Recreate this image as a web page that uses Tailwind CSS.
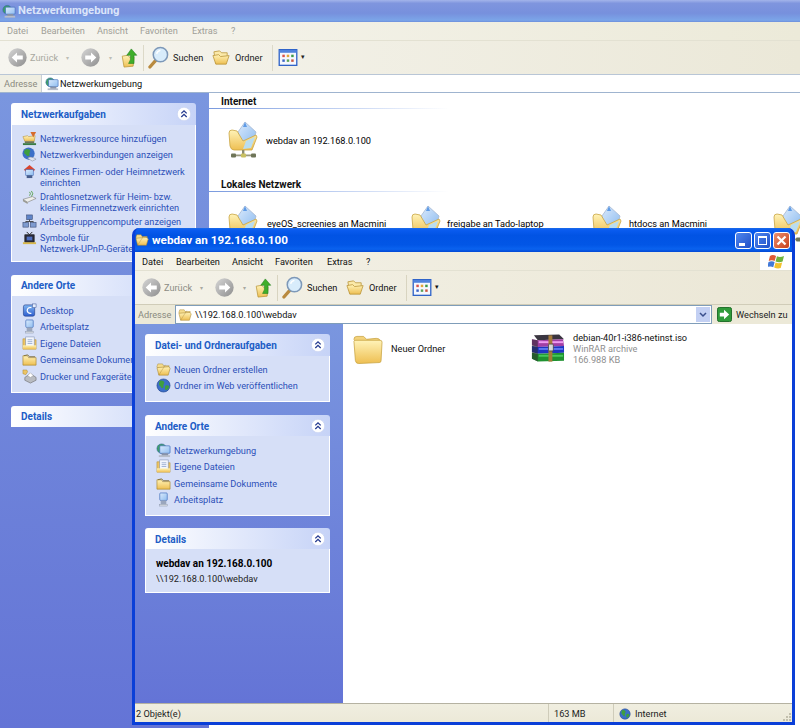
<!DOCTYPE html>
<html lang="de">
<head>
<meta charset="utf-8">
<title>webdav an 192.168.0.100</title>
<script src="https://cdn.jsdelivr.net/npm/@tailwindcss/browser@4"></script>
</head>
<body class="m-0 bg-white">
<svg width="0" height="0" class="absolute">
  <defs>
    <linearGradient id="gy" x1="0" y1="0" x2="0" y2="1"><stop offset="0" stop-color="#fff3b8"/><stop offset="1" stop-color="#eebf52"/></linearGradient>
    <linearGradient id="gb" x1="0" y1="0" x2="1" y2="1"><stop offset="0" stop-color="#dbeafc"/><stop offset="1" stop-color="#8fbdf0"/></linearGradient>
    <linearGradient id="gg" x1="0" y1="0" x2="1" y2="1"><stop offset="0" stop-color="#d6d6d6"/><stop offset="1" stop-color="#8e8e8e"/></linearGradient>
    <linearGradient id="gw" x1="0" y1="0" x2="0" y2="1"><stop offset="0" stop-color="#7fb5f0"/><stop offset="1" stop-color="#2f5fd0"/></linearGradient>
    <symbol id="netfolder" viewBox="0 0 30 40">
      <path d="M17 1 L28 11 L25 22 L13 22 L10 11 Z" fill="url(#gb)" stroke="#a5b8d2" stroke-width=".8"/>
      <path d="M17 1 L19 6 L15 6 Z" fill="#5f9be6"/>
      <path d="M1 12 Q1 9 4 9 L9 10 L15 20 L28 14 L29 16 L24 29 L6 29 Q3 29 2 25 Z" fill="url(#gy)" stroke="#c9a443" stroke-width=".8"/>
      <path d="M18 20 L27 16 L23 27 L15 28 Z" fill="#b9ddf0"/>
      <rect x="14" y="29" width="2.400" height="5" fill="#8d8d72"/>
      <rect x="5" y="33.500" width="21" height="1.800" fill="#9a9a80"/>
      <rect x="3" y="32.500" width="5" height="4" rx="1" fill="#6f7558"/>
      <rect x="13" y="32.500" width="5" height="4" rx="1" fill="#c9c062"/>
      <rect x="23" y="32.500" width="5" height="4" rx="1" fill="#6f7558"/>
    </symbol>
    <symbol id="folderbig" viewBox="0 0 32 32">
      <path d="M2 6 Q2 3 5 3 L12 3 L15 6 L25 5 Q29 5 29 8 L29 9 L4 9 Z" fill="#f3d27a" stroke="#c9a443" stroke-width=".8"/>
      <path d="M2 8 Q2 7 4 7 L29 7 Q31 7 31 9 L30 28 Q30 30 28 30 L7 31 Q4 31 3.500 28 Z" fill="url(#gy)" stroke="#c9a443" stroke-width=".8"/>
    </symbol>
    <symbol id="folderopen" viewBox="0 0 20 20">
      <path d="M2 4 L8 3 L10 5 L16 5 L16 9 L4 16 Z" fill="#fbe9a9" stroke="#b89336" stroke-width=".8"/>
      <path d="M1 8 L7 7 L9 9 L18 8 L15 17 L4 17 Z" fill="url(#gy)" stroke="#b89336" stroke-width=".8"/>
    </symbol>
    <symbol id="folderup" viewBox="0 0 18 22">
      <path d="M1 9 L7 8 L9 10 L14 10 L13 20 L3 21 Z" fill="url(#gy)" stroke="#b89336" stroke-width=".8"/>
      <path d="M11 1 L17 8 L14 8 L14 17 L8 17 Q11 13 10 8 L6 8 Z" fill="#3fae2a" stroke="#1f7d1b" stroke-width=".6"/>
    </symbol>
    <symbol id="search" viewBox="0 0 22 24">
      <path d="M2 22 L9 14" stroke="#b98a3e" stroke-width="3.400" stroke-linecap="round"/>
      <circle cx="13" cy="9" r="7.500" fill="#d8ecfb" stroke="#7d98b8" stroke-width="1.600"/>
      <path d="M9 8 Q10 5 13 4.500" stroke="#fff" stroke-width="1.500" fill="none"/>
    </symbol>
    <symbol id="views" viewBox="0 0 20 18">
      <rect x=".7" y=".7" width="18.600" height="16.600" fill="#f6f8fe" stroke="#2f63c8" stroke-width="1.400"/>
      <rect x="1" y="1" width="18" height="3" fill="#4f82dd"/>
      <rect x="4" y="6" width="2.600" height="2.600" fill="#d9534a"/><rect x="8.700" y="6" width="2.600" height="2.600" fill="#e0a63a"/><rect x="13.400" y="6" width="2.600" height="2.600" fill="#3d9a48"/>
      <rect x="4" y="11" width="2.600" height="2.600" fill="#3d66c4"/><rect x="8.700" y="11" width="2.600" height="2.600" fill="#5aa257"/><rect x="13.400" y="11" width="2.600" height="2.600" fill="#c9563f"/>
    </symbol>
    <symbol id="back" viewBox="0 0 18 18">
      <circle cx="9" cy="9" r="8.700" fill="url(#gg)"/>
      <path d="M3.500 9 L8.500 4.300 L8.500 7.200 L14 7.200 L14 10.800 L8.500 10.800 L8.500 13.700 Z" fill="#fff"/>
    </symbol>
    <symbol id="fwd" viewBox="0 0 18 18">
      <circle cx="9" cy="9" r="8.700" fill="url(#gg)"/>
      <path d="M14.500 9 L9.500 4.300 L9.500 7.200 L4 7.200 L4 10.800 L9.500 10.800 L9.500 13.700 Z" fill="#fff"/>
    </symbol>
    <symbol id="globe" viewBox="0 0 16 16">
      <circle cx="8" cy="8" r="7" fill="#3c6fc8" stroke="#1f3f85" stroke-width=".6"/>
      <path d="M4 3 Q8 2 9 5 Q7 8 8 10 Q6 12 5 9 Q2 8 4 3 Z M10 8 Q13 7 14 9 Q13 13 10 13 Q9 11 10 8 Z" fill="#3f9e3f"/>
    </symbol>
    <symbol id="netcomp" viewBox="0 0 16 16">
      <circle cx="6" cy="6" r="5" fill="#3fa06a" stroke="#2b5f9a" stroke-width=".6"/>
      <rect x="4" y="3" width="11" height="8" rx="1" fill="url(#gb)" stroke="#3a68b8" stroke-width=".7"/>
      <rect x="6" y="11" width="7" height="3" fill="#8a94a8"/>
      <rect x="3" y="13" width="12" height="2" fill="#b7bdc9"/>
    </symbol>
    <symbol id="netglobe" viewBox="0 0 16 16">
      <circle cx="7" cy="7" r="6.500" fill="#3c6fc8"/>
      <path d="M3 3 Q7 1 9 4 Q7 7 8 9 Q6 11 4 8 Q1 7 3 3 Z" fill="#3f9e3f"/>
      <path d="M6 12 Q9 9 15 13 L11 15 Z" fill="#dfe3ee" stroke="#7a8090" stroke-width=".5"/>
    </symbol>
    <symbol id="netadd" viewBox="0 0 16 16">
      <path d="M1 6 L6 5 L7 6 L14 5 L13 11 L3 11 Z" fill="url(#gy)" stroke="#b89336" stroke-width=".6"/>
      <path d="M9 1 L15 1 L12 7 Z" fill="#d66c2c"/>
      <rect x="3" y="11" width="10" height="2" fill="#6f7558"/><rect x="1" y="13" width="14" height="2" fill="#3a7a45"/>
    </symbol>
    <symbol id="home" viewBox="0 0 16 16">
      <path d="M8 1 L14 6 L12 8 L4 8 L2 6 Z" fill="#d9442e"/>
      <rect x="4" y="6" width="8" height="6" fill="url(#gb)" stroke="#3a68b8" stroke-width=".6"/>
      <rect x="5" y="12" width="6" height="3" fill="#475d8c"/>
    </symbol>
    <symbol id="wifi" viewBox="0 0 16 16">
      <path d="M1 10 L11 7 L15 9 L6 13 Z" fill="#eeeeea" stroke="#777" stroke-width=".6"/>
      <path d="M1 10 L6 13 L6 15 L1 12 Z" fill="#9a9a92"/>
      <path d="M8 6 Q10 4 8 2 M10 7 Q13 4 10 1" stroke="#59a14f" fill="none" stroke-width="1"/>
    </symbol>
    <symbol id="workgroup" viewBox="0 0 16 16">
      <rect x="5" y="1" width="6" height="5" fill="#5f84c8" stroke="#34456f" stroke-width=".6"/>
      <rect x="1" y="9" width="6" height="5" fill="#7e9bd0" stroke="#34456f" stroke-width=".6"/>
      <rect x="9" y="9" width="6" height="5" fill="#7e9bd0" stroke="#34456f" stroke-width=".6"/>
      <path d="M8 6 L8 8 M4 9 L4 8 L12 8 L12 9" stroke="#444" fill="none"/>
    </symbol>
    <symbol id="tv" viewBox="0 0 16 16">
      <rect x="3" y="4" width="10" height="8" fill="#2a2a38" stroke="#111" stroke-width=".6"/>
      <rect x="5" y="6" width="6" height="4" fill="#4f6fc0"/>
      <path d="M5 1 L8 4 L11 1" stroke="#222" fill="none"/>
      <rect x="1" y="12" width="14" height="2" fill="#d9b84a"/>
    </symbol>
    <symbol id="desktop" viewBox="0 0 16 16">
      <rect x="1.500" y="2" width="12" height="12" rx="2" fill="url(#gw)" stroke="#24418c" stroke-width=".7"/>
      <path d="M10 5 Q6 4 5.500 8 Q6 11.500 10 11" stroke="#fff" stroke-width="1.300" fill="none"/>
      <rect x="11" y="1" width="4" height="4" fill="#e6eefc" stroke="#24418c" stroke-width=".5"/>
    </symbol>
    <symbol id="pc" viewBox="0 0 16 16">
      <rect x="4" y="1" width="8" height="8" rx="1" fill="url(#gb)" stroke="#3a68b8" stroke-width=".7"/>
      <rect x="5" y="9" width="6" height="5" fill="#9aa6bd"/>
      <rect x="4" y="13" width="8" height="2" fill="#d5d9e2" stroke="#7f8aa0" stroke-width=".4"/>
    </symbol>
    <symbol id="docs" viewBox="0 0 16 16">
      <path d="M1 3 L5 3 L6 4 L15 4 L15 14 L1 14 Z" fill="#ecc466" stroke="#b89336" stroke-width=".6"/>
      <rect x="4" y="1" width="9" height="11" fill="#f3f6fd" stroke="#7f8fb0" stroke-width=".6"/>
      <path d="M6 4 H11 M6 6 H11 M6 8 H11" stroke="#8aa0c8" stroke-width=".8"/>
      <rect x="1" y="10" width="14" height="4" fill="url(#gy)"/>
    </symbol>
    <symbol id="shared" viewBox="0 0 16 16">
      <path d="M1 4 L6 4 L7 6 L15 6 L15 14 L1 14 Z" fill="url(#gy)" stroke="#a88630" stroke-width=".7"/>
      <path d="M2 4 L6 3 L8 5 L14 5" stroke="#705d20" fill="none" stroke-width=".8"/>
    </symbol>
    <symbol id="printer" viewBox="0 0 16 16">
      <path d="M1 1 L5 1 L6 3 L4 6 L1 5 Z" fill="#ecc466" stroke="#a88630" stroke-width=".5"/>
      <path d="M3 9 L9 5 L15 9 L15 12 L9 15 L3 12 Z" fill="#b9bcc2" stroke="#666" stroke-width=".6"/>
      <path d="M6 7 L9 4 L12 7 L9 9 Z" fill="#fff" stroke="#888" stroke-width=".4"/>
    </symbol>
    <symbol id="foldersm" viewBox="0 0 16 16">
      <path d="M1 5 L2 2 L7 2 L8 4 L14 4 L12 7 L4 8 Z" fill="#f5dc8e" stroke="#a88630" stroke-width=".5"/>
      <path d="M1 6 L14 5 L15 7 L13 14 L3 14 Z" fill="url(#gy)" stroke="#a88630" stroke-width=".6"/>
      <path d="M3 14 L10 3" stroke="#7f5a12" stroke-width=".7" opacity=".4"/>
    </symbol>
    <symbol id="chev" viewBox="0 0 14 14">
      <circle cx="7" cy="7" r="6.700" fill="#fff" stroke="#c3cff0" stroke-width=".6"/>
      <path d="M4.300 6.400 L7 3.800 L9.700 6.400 M4.300 10 L7 7.400 L9.700 10" stroke="#23398f" stroke-width="1.300" fill="none"/>
    </symbol>
    <symbol id="rar" viewBox="0 0 36 30">
      <path d="M4 2 L30 1 L35 6 L8 7 Z" fill="#3a3540"/>
      <path d="M2 6 L8 7 L34 6 L35 13 L8 14 L2 12 Z" fill="#a23fa5"/>
      <rect x="9" y="8" width="25" height="2" fill="#f09bf0"/>
      <path d="M2 13 L8 14 L35 13 L35 20 L8 21 L2 19 Z" fill="#1f34c2"/>
      <rect x="9" y="15" width="25" height="2" fill="#5d76f2"/>
      <path d="M2 20 L8 21 L35 20 L35 28 L8 29 L2 26 Z" fill="#1f9230"/>
      <rect x="9" y="22" width="25" height="2" fill="#46c85a"/>
      <path d="M2 6 L8 7 L8 29 L2 26 Z" fill="#2a2a2a" opacity=".55"/>
      <rect x="19" y="2" width="4" height="27" fill="#a67b3a"/>
      <rect x="19" y="11" width="5" height="7" rx="1" fill="#d8d8d8" stroke="#333" stroke-width=".7"/>
    </symbol>
    <symbol id="go" viewBox="0 0 16 16">
      <rect x=".5" y=".5" width="15" height="15" rx="2" fill="#2f9a3a" stroke="#1a6a24"/>
      <path d="M7.500 3 L13 8 L7.500 13 L7.500 10 L3 10 L3 6 L7.500 6 Z" fill="#fff"/>
    </symbol>
    <symbol id="flag" viewBox="0 0 18 16">
      <path d="M2 2 Q5 0 8.500 2 L7 7.500 Q4 6 .7 7.500 Z" fill="#dd5a36"/>
      <path d="M9.500 2.500 Q13 4 17 2 L15.500 8 Q12 9.500 8 8 Z" fill="#6fb33c"/>
      <path d="M.5 8.500 Q4 7 7 8.500 L5.500 14 Q3 12.500 -1 14 Z" fill="#4279d8"/>
      <path d="M8 9 Q11 10.500 15 9 L13.500 15 Q10 16 6.500 14.500 Z" fill="#f2c22e"/>
    </symbol>
    <symbol id="grip" viewBox="0 0 11 11">
      <path d="M8 2 h2 v2 h-2z M5 5 h2 v2 h-2z M8 5 h2 v2 h-2z M2 8 h2 v2 h-2z M5 8 h2 v2 h-2z M8 8 h2 v2 h-2z" fill="#c2bfad"/>
    </symbol>
  </defs>
</svg>

<div class="relative w-[800px] h-[728px] overflow-hidden bg-white font-['Roboto',sans-serif] text-[9.2px] leading-none text-black">

  <!-- inactive window behind -->
  <div class="absolute left-0 top-0 w-[800px] h-[728px] flex flex-col">
    <div class="h-[22px] shrink-0 flex items-center pl-[2px] gap-[2px] bg-[linear-gradient(180deg,#a3b4ea_0%,#7f95de_15%,#7790dd_60%,#7ba5e8_92%,#6d8fdc_100%)]">
      <svg class="w-[14px] h-[15px]"><use href="#netcomp"/></svg>
      <span class="text-[#dbe5fa] text-[11.2px] font-bold">Netzwerkumgebung</span>
    </div>
    <div class="h-[19px] shrink-0 flex items-center bg-linear-to-r from-[#f6f5ef] to-[#ecead9] text-[#a0a098] border-b border-[#e3e1d2]">
      <span class="ml-[7px] w-[34px]">Datei</span><span class="w-[57px]">Bearbeiten</span><span class="w-[42px] -ml-[1px]">Ansicht</span><span class="w-[52px] ml-[1px]">Favoriten</span><span class="w-[39px]">Extras</span><span>?</span>
    </div>
    <div class="h-[34px] shrink-0 flex items-center bg-linear-to-r from-[#f6f5ef] to-[#ebe8d8] border-b border-[#b9c6d6]">
      <svg class="w-[19px] h-[19px] ml-[8px]"><use href="#back"/></svg>
      <span class="ml-[3px] w-[30px] text-[#a8a8a0]">Zurück</span>
      <span class="ml-[6px] text-[6px] text-[#bdbdb5]">▾</span>
      <svg class="w-[19px] h-[19px] ml-[12px]"><use href="#fwd"/></svg>
      <span class="ml-[9px] text-[6px] text-[#bdbdb5]">▾</span>
      <svg class="w-[17px] h-[20px] ml-[9px]"><use href="#folderup"/></svg>
      <div class="w-px h-[26px] bg-[#dcd9c8] ml-[5px]"></div>
      <svg class="w-[21px] h-[23px] ml-[4px]"><use href="#search"/></svg>
      <span class="ml-[4px] w-[30px] text-[#222]">Suchen</span>
      <svg class="w-[19px] h-[19px] ml-[9px]"><use href="#folderopen"/></svg>
      <span class="ml-[4px] w-[30px] text-[#222]">Ordner</span>
      <div class="w-px h-[26px] bg-[#dcd9c8] ml-[7px]"></div>
      <svg class="w-[20px] h-[17px] ml-[5px]"><use href="#views"/></svg>
      <span class="ml-[3px] text-[7px] text-[#222]">▾</span>
    </div>
    <div class="h-[18px] shrink-0 flex items-center bg-[#efeee2] border-b border-[#9fb4cf]">
      <span class="ml-[4px] w-[37px] text-[#8a8a80]">Adresse</span>
      <div class="flex-1 h-full bg-white flex items-center pl-[3px] gap-[1px] border-l border-[#c8cfd6]">
        <svg class="w-[14px] h-[14px]"><use href="#netcomp"/></svg>
        <span class="text-[#111]">Netzwerkumgebung</span>
      </div>
    </div>
    <div class="flex-1 flex min-h-0">
      <div class="w-[209px] shrink-0 bg-[linear-gradient(180deg,#7a96df,#6474d6)] pl-[11px] pt-[10px] flex flex-col">
        <div class="w-[185px]">
          <div class="h-[22px] rounded-t-[3px] bg-linear-to-r from-white to-[#c6d3f7] flex items-center justify-between pl-[10px] pr-[5px]">
            <span class="font-bold text-[10px] text-[#215dc6] pt-[2px]">Netzwerkaufgaben</span>
            <svg class="w-[14px] h-[14px]"><use href="#chev"/></svg>
          </div>
          <div class="h-[137px] bg-[#d6dff7] border border-t-0 border-white pl-[10px] pt-[5px] text-[#2d50b8] flex flex-col whitespace-nowrap">
            <div class="h-[16.5px] flex items-center gap-[3px]"><svg class="w-[15px] h-[15px] shrink-0"><use href="#netadd"/></svg><span>Netzwerkressource hinzufügen</span></div>
            <div class="h-[16.5px] flex items-center gap-[3px]"><svg class="w-[15px] h-[15px] shrink-0"><use href="#netglobe"/></svg><span>Netzwerkverbindungen anzeigen</span></div>
            <div class="h-[25px] flex gap-[3px]"><svg class="w-[15px] h-[15px] shrink-0 mt-[1px]"><use href="#home"/></svg><span class="leading-[11px] pt-[3px]">Kleines Firmen- oder Heimnetzwerk<br>einrichten</span></div>
            <div class="h-[25px] flex gap-[3px]"><svg class="w-[15px] h-[15px] shrink-0 mt-[2px]"><use href="#wifi"/></svg><span class="leading-[11px] pt-[3px]">Drahtlosnetzwerk für Heim- bzw.<br>kleines Firmennetzwerk einrichten</span></div>
            <div class="h-[16.5px] flex items-center gap-[3px]"><svg class="w-[15px] h-[15px] shrink-0"><use href="#workgroup"/></svg><span>Arbeitsgruppencomputer anzeigen</span></div>
            <div class="h-[25px] flex gap-[3px]"><svg class="w-[15px] h-[15px] shrink-0 mt-[1px]"><use href="#tv"/></svg><span class="leading-[11px] pt-[2px]">Symbole für<br>Netzwerk-UPnP-Geräte ausblenden</span></div>
          </div>
        </div>
        <div class="w-[185px] mt-[13px]">
          <div class="h-[21px] rounded-t-[3px] bg-linear-to-r from-white to-[#c6d3f7] flex items-center pl-[10px]">
            <span class="font-bold text-[10px] text-[#215dc6] pt-[1px]">Andere Orte</span>
          </div>
          <div class="h-[97px] bg-[#d6dff7] border border-t-0 border-white pl-[10px] pt-[6px] text-[#2d50b8] flex flex-col whitespace-nowrap">
            <div class="h-[16.5px] flex items-center gap-[3px]"><svg class="w-[15px] h-[15px] shrink-0"><use href="#desktop"/></svg><span>Desktop</span></div>
            <div class="h-[16.5px] flex items-center gap-[3px]"><svg class="w-[15px] h-[15px] shrink-0"><use href="#pc"/></svg><span>Arbeitsplatz</span></div>
            <div class="h-[16.5px] flex items-center gap-[3px]"><svg class="w-[15px] h-[15px] shrink-0"><use href="#docs"/></svg><span>Eigene Dateien</span></div>
            <div class="h-[16.5px] flex items-center gap-[3px]"><svg class="w-[15px] h-[15px] shrink-0"><use href="#shared"/></svg><span>Gemeinsame Dokumente</span></div>
            <div class="h-[16.5px] flex items-center gap-[3px]"><svg class="w-[15px] h-[15px] shrink-0"><use href="#printer"/></svg><span>Drucker und Faxgeräte</span></div>
          </div>
        </div>
        <div class="w-[185px] mt-[13px]">
          <div class="h-[21px] rounded-t-[3px] bg-linear-to-r from-white to-[#c6d3f7] flex items-center pl-[10px]">
            <span class="font-bold text-[10px] text-[#215dc6] pt-[1px]">Details</span>
          </div>
        </div>
      </div>
      <div class="flex-1 bg-white pl-[12px] pt-[3px] relative">
        <div class="font-bold text-[10px] h-[11px] flex items-center text-[#111]">Internet</div>
        <div class="-ml-[12px] mt-[1px] w-[240px] h-px bg-linear-to-r from-[#7a9ade] to-white"></div>
        <div class="flex items-center mt-[12px] ml-[7px] h-[40px]">
          <svg class="w-[30px] h-[40px]"><use href="#netfolder"/></svg>
          <span class="ml-[8px] -mt-[1px]">webdav an 192.168.0.100</span>
        </div>
        <div class="font-bold text-[10px] h-[11px] flex items-center mt-[18px] text-[#111]">Lokales Netzwerk</div>
        <div class="-ml-[12px] mt-[1px] w-[240px] h-px bg-linear-to-r from-[#7a9ade] to-white"></div>
        <div class="flex mt-[13px] ml-[7px] whitespace-nowrap">
          <div class="w-[183px] shrink-0 flex items-center h-[40px]"><svg class="w-[30px] h-[40px]"><use href="#netfolder"/></svg><span class="ml-[9px] -mt-[2px]">eyeOS_screenies an Macmini</span></div>
          <div class="w-[181px] shrink-0 flex items-center h-[40px]"><svg class="w-[30px] h-[40px]"><use href="#netfolder"/></svg><span class="ml-[6px] -mt-[2px]">freigabe an Tado-laptop</span></div>
          <div class="w-[181px] shrink-0 flex items-center h-[40px]"><svg class="w-[30px] h-[40px]"><use href="#netfolder"/></svg><span class="ml-[7px] -mt-[2px]">htdocs an Macmini</span></div>
          <div class="w-[30px] shrink-0 h-[40px]"><svg class="w-[30px] h-[40px]"><use href="#netfolder"/></svg></div>
        </div>
      </div>
    </div>
  </div>

  <!-- active window in front -->
  <div class="absolute left-[132px] top-[228px] w-[663px] h-[497px] flex flex-col bg-[#0a3fd8] rounded-t-[7px] overflow-hidden border-x-[3px] border-b-[3px] border-[#0a3fd8]">
    <div class="h-[24px] shrink-0 -mx-[3px] flex items-center pl-[3px] pr-[4px] gap-[3px] bg-[linear-gradient(180deg,#1c6be8_0%,#0a5cf0_8%,#0153e4_30%,#0256e6_70%,#0a62ef_88%,#0348d4_100%)]">
      <svg class="w-[14px] h-[14px]"><use href="#foldersm"/></svg>
      <span class="text-white text-[11.7px] font-bold pt-px">webdav an 192.168.0.100</span>
      <div class="ml-auto flex gap-[2px] mr-[1px]">
        <div class="w-[17px] h-[17px] rounded-[3px] border border-white bg-[linear-gradient(135deg,#4f86ee,#2050c8)] flex items-end pl-[3px] pb-[2px]"><div class="w-[6px] h-[3px] bg-white"></div></div>
        <div class="w-[17px] h-[17px] rounded-[3px] border border-white bg-[linear-gradient(135deg,#4f86ee,#2050c8)] flex items-center justify-center"><div class="w-[9px] h-[9px] border border-t-[2px] border-white"></div></div>
        <div class="w-[17px] h-[17px] rounded-[3px] border border-white bg-[linear-gradient(135deg,#e98f70,#c8401a)] flex items-center justify-center">
          <svg class="w-[11px] h-[11px]" viewBox="0 0 11 11"><path d="M1.500 1.500 L9.500 9.500 M9.500 1.500 L1.500 9.500" stroke="#fff" stroke-width="2.200"/></svg>
        </div>
      </div>
    </div>
    <div class="h-[19px] shrink-0 flex items-center bg-linear-to-r from-[#f4f2e8] to-[#ebe7d6] text-[#111] border-b border-[#e3e1d2]">
      <span class="ml-[7px] w-[34px] pt-px">Datei</span><span class="w-[57px] pt-px">Bearbeiten</span><span class="w-[42px] -ml-[1px] pt-px">Ansicht</span><span class="w-[52px] ml-[1px] pt-px">Favoriten</span><span class="w-[39px] pt-px">Extras</span><span class="pt-px">?</span>
      <div class="ml-auto w-[32px] h-full bg-white flex items-center justify-center"><svg class="w-[17px] h-[15px]"><use href="#flag"/></svg></div>
    </div>
    <div class="h-[34px] shrink-0 flex items-center bg-linear-to-r from-[#f4f2e8] to-[#ebe7d6] border-b border-[#d0ccb8]">
      <svg class="w-[19px] h-[19px] ml-[7px]"><use href="#back"/></svg>
      <span class="ml-[3px] w-[30px] text-[#8c8c84]">Zurück</span>
      <span class="ml-[6px] text-[6px] text-[#a8a8a0]">▾</span>
      <svg class="w-[19px] h-[19px] ml-[12px]"><use href="#fwd"/></svg>
      <span class="ml-[9px] text-[6px] text-[#a8a8a0]">▾</span>
      <svg class="w-[17px] h-[20px] ml-[9px]"><use href="#folderup"/></svg>
      <div class="w-px h-[26px] bg-[#d8d4c0] ml-[5px]"></div>
      <svg class="w-[21px] h-[23px] ml-[4px]"><use href="#search"/></svg>
      <span class="ml-[4px] w-[30px] text-[#111]">Suchen</span>
      <svg class="w-[19px] h-[19px] ml-[9px]"><use href="#folderopen"/></svg>
      <span class="ml-[4px] w-[30px] text-[#111]">Ordner</span>
      <div class="w-px h-[26px] bg-[#d8d4c0] ml-[7px]"></div>
      <svg class="w-[20px] h-[17px] ml-[5px]"><use href="#views"/></svg>
      <span class="ml-[3px] text-[7px] text-[#111]">▾</span>
    </div>
    <div class="h-[19px] shrink-0 flex items-center bg-[#ece9d8]">
      <span class="ml-[3px] w-[37px] text-[#8a8a80]">Adresse</span>
      <div class="w-[537px] h-full bg-white border border-[#7f9db9] flex items-center pl-[2px] gap-[1px]">
        <svg class="w-[14px] h-[14px] shrink-0"><use href="#foldersm"/></svg>
        <span class="ml-[2px] text-[#111]">\\192.168.0.100\webdav</span>
        <div class="ml-auto w-[14px] h-[15px] bg-[#c3d0f3] flex items-center justify-center mr-px"><svg class="w-[8px] h-[6px]" viewBox="0 0 8 6"><path d="M1 1 L4 4 L7 1" stroke="#3a4f8c" stroke-width="1.500" fill="none"/></svg></div>
      </div>
      <svg class="w-[15px] h-[15px] ml-[5px] shrink-0"><use href="#go"/></svg>
      <span class="ml-[4px] text-[#222] whitespace-nowrap">Wechseln zu</span>
    </div>
    <div class="flex-1 flex min-h-0 bg-white">
      <div class="w-[208px] shrink-0 bg-[linear-gradient(180deg,#7a96df,#6474d6)] pl-[10px] pt-[10px] flex flex-col">
        <div class="w-[185px]">
          <div class="h-[22px] rounded-t-[3px] bg-linear-to-r from-white to-[#c6d3f7] flex items-center justify-between pl-[10px] pr-[5px]">
            <span class="font-bold text-[10px] text-[#215dc6] pt-[2px]">Datei- und Ordneraufgaben</span>
            <svg class="w-[14px] h-[14px]"><use href="#chev"/></svg>
          </div>
          <div class="h-[46px] bg-[#d6dff7] border border-t-0 border-white pl-[10px] pt-[5px] text-[#2d50b8] flex flex-col">
            <div class="h-[16.5px] flex items-center gap-[3px]"><svg class="w-[15px] h-[15px] shrink-0"><use href="#foldersm"/></svg><span>Neuen Ordner erstellen</span></div>
            <div class="h-[16.5px] flex items-center gap-[3px]"><svg class="w-[15px] h-[15px] shrink-0"><use href="#globe"/></svg><span>Ordner im Web veröffentlichen</span></div>
          </div>
        </div>
        <div class="w-[185px] mt-[13px]">
          <div class="h-[21px] rounded-t-[3px] bg-linear-to-r from-white to-[#c6d3f7] flex items-center justify-between pl-[10px] pr-[5px]">
            <span class="font-bold text-[10px] text-[#215dc6] pt-[2px]">Andere Orte</span>
            <svg class="w-[14px] h-[14px]"><use href="#chev"/></svg>
          </div>
          <div class="h-[80px] bg-[#d6dff7] border border-t-0 border-white pl-[10px] pt-[6px] text-[#2d50b8] flex flex-col">
            <div class="h-[16.5px] flex items-center gap-[3px]"><svg class="w-[15px] h-[15px] shrink-0"><use href="#netcomp"/></svg><span>Netzwerkumgebung</span></div>
            <div class="h-[16.5px] flex items-center gap-[3px]"><svg class="w-[15px] h-[15px] shrink-0"><use href="#docs"/></svg><span>Eigene Dateien</span></div>
            <div class="h-[16.5px] flex items-center gap-[3px]"><svg class="w-[15px] h-[15px] shrink-0"><use href="#shared"/></svg><span>Gemeinsame Dokumente</span></div>
            <div class="h-[16.5px] flex items-center gap-[3px]"><svg class="w-[15px] h-[15px] shrink-0"><use href="#pc"/></svg><span>Arbeitsplatz</span></div>
          </div>
        </div>
        <div class="w-[185px] mt-[12px]">
          <div class="h-[21px] rounded-t-[3px] bg-linear-to-r from-white to-[#c6d3f7] flex items-center justify-between pl-[10px] pr-[5px]">
            <span class="font-bold text-[10px] text-[#215dc6] pt-[2px]">Details</span>
            <svg class="w-[14px] h-[14px]"><use href="#chev"/></svg>
          </div>
          <div class="h-[44px] bg-[#d6dff7] border border-t-0 border-white pl-[10px] pt-[10px] flex flex-col gap-[5px]">
            <span class="font-bold text-[10px]">webdav an 192.168.0.100</span>
            <span class="text-[#222]">\\192.168.0.100\webdav</span>
          </div>
        </div>
      </div>
      <div class="flex-1 pt-[9px] pl-[9px] flex items-start relative">
        <svg class="w-[31px] h-[32px] shrink-0"><use href="#folderbig"/></svg>
        <span class="ml-[8px] mt-[11px] w-[139px] text-[#111]">Neuer Ordner</span>
        <svg class="w-[35px] h-[30px] shrink-0"><use href="#rar"/></svg>
        <div class="ml-[8px] flex flex-col gap-[1px] leading-[10px] whitespace-nowrap">
          <span class="text-[#111]">debian-40r1-i386-netinst.iso</span>
          <span class="text-[#8f8f8f]">WinRAR archive</span>
          <span class="text-[#8f8f8f]">166.988 KB</span>
        </div>
      </div>
    </div>
    <div class="h-[19px] shrink-0 flex items-center bg-[linear-gradient(180deg,#f0eee0,#ece9d8)] border-t border-[#b5b2a2] text-[#222]">
      <span class="ml-[1px] w-[412px] pt-[2px]">2 Objekt(e)</span>
      <div class="w-px h-full bg-[#cfccba]"></div>
      <span class="ml-[5px] w-[59px] pt-[2px]">163 MB</span>
      <div class="w-px h-full bg-[#cfccba]"></div>
      <svg class="w-[12px] h-[12px] ml-[5px] mt-[1px]"><use href="#globe"/></svg>
      <span class="ml-[4px] pt-[2px]">Internet</span>
      <svg class="w-[11px] h-[11px] ml-auto self-end"><use href="#grip"/></svg>
    </div>
  </div>
</div>
</body>
</html>
